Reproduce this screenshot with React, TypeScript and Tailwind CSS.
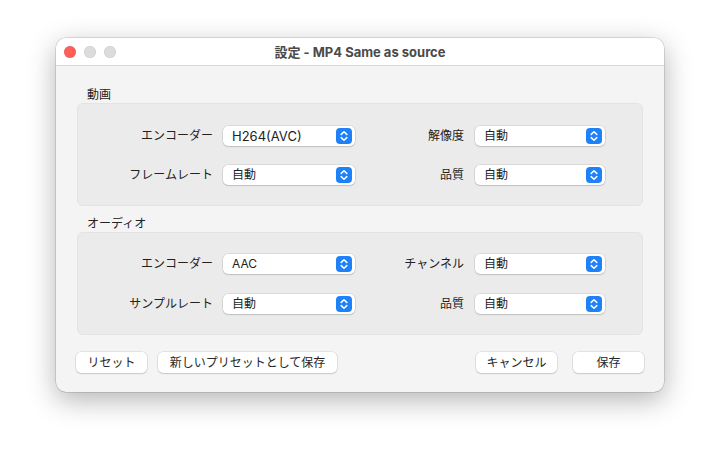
import React from "react";

const font = { fontFamily: 'Inter, "Noto Sans CJK JP", sans-serif' };

function Stepper() {
  return (
    <div className="w-[16px] h-[16px] rounded-[4px] bg-[#1f81f8] flex items-center justify-center">
      <svg width="16" height="16" viewBox="0 0 16 16" fill="none">
        <path d="M5.2 6.4 L8 3.8 L10.8 6.4" stroke="white" strokeWidth="1.5" strokeLinecap="round" strokeLinejoin="round" />
        <path d="M5.2 9.6 L8 12.2 L10.8 9.6" stroke="white" strokeWidth="1.5" strokeLinecap="round" strokeLinejoin="round" />
      </svg>
    </div>
  );
}

function Select({ value, w, latin }: { value: string; w: string; latin?: boolean }) {
  return (
    <div
      className={`${w} h-[20px] bg-white rounded-[5px] flex items-center justify-between pl-[9px] pr-[3px] shadow-[0_0_0_0.5px_rgba(0,0,0,0.14),0_1px_1.5px_rgba(0,0,0,0.12)]`}
    >
      <span className={`${latin ? "text-[13px]" : "text-[12px]"} leading-[16px] text-[#222222]`}>{value}</span>
      <Stepper />
    </div>
  );
}

function Row({ l1, v1, l2, v2, latin }: { l1: string; v1: string; l2: string; v2: string; latin?: boolean }) {
  return (
    <div className="flex items-center h-[20px]">
      <div className="w-[135px] text-right text-[12px] leading-[16px] text-[#222222]">{l1}</div>
      <div className="ml-[10px]">
        <Select value={v1} w="w-[132px]" latin={latin} />
      </div>
      <div className="w-[109px] text-right text-[12px] leading-[16px] text-[#222222]">{l2}</div>
      <div className="ml-[11px]">
        <Select value={v2} w="w-[130px]" />
      </div>
    </div>
  );
}

function Button({ children, w }: { children: React.ReactNode; w: string }) {
  return (
    <div
      className={`${w} h-[21px] bg-white rounded-[5px] flex items-center justify-center text-[12px] leading-[16px] text-[#262626] shadow-[0_0_0_0.5px_rgba(0,0,0,0.14),0_1px_1.5px_rgba(0,0,0,0.12)]`}
    >
      {children}
    </div>
  );
}

export default function App() {
  return (
    <div className="w-[720px] h-[466px] bg-white pl-[56px] pt-[38px]" style={font}>
      <div className="w-[608px] h-[354px] rounded-[10px] overflow-hidden bg-[#f4f4f4] shadow-[0_0_0_0.5px_rgba(0,0,0,0.22),0_8px_28px_rgba(0,0,0,0.3)] flex flex-col">
        <div className="h-[28px] bg-white border-b border-[#d8d8d8] grid grid-cols-[1fr_auto_1fr] items-center">
          <div className="flex items-center gap-[8px] pl-[8px]">
            <div className="w-[12px] h-[12px] rounded-full bg-[#fe5f57] shadow-[inset_0_0_0_0.5px_rgba(0,0,0,0.12)]" />
            <div className="w-[12px] h-[12px] rounded-full bg-[#dcdcdc] shadow-[inset_0_0_0_0.5px_rgba(0,0,0,0.1)]" />
            <div className="w-[12px] h-[12px] rounded-full bg-[#dcdcdc] shadow-[inset_0_0_0_0.5px_rgba(0,0,0,0.1)]" />
          </div>
          <div className="text-[13px] font-bold leading-[16px] text-[#4a4a4a]">設定 - MP4 Same as source</div>
          <div />
        </div>
        <div className="px-[21px]">
          <div className="mt-[21px] pl-[10px] text-[12px] leading-[16px] text-[#222222]">動画</div>
          <div className="bg-[#ebebeb] border border-[#e3e3e3] rounded-[6px] pt-[22px] pb-[20px] flex flex-col gap-[19px]">
            <Row l1="エンコーダー" v1="H264(AVC)" l2="解像度" v2="自動" latin />
            <Row l1="フレームレート" v1="自動" l2="品質" v2="自動" />
          </div>
          <div className="mt-[10px] pl-[10px] text-[12px] leading-[16px] text-[#222222]">オーディオ</div>
          <div className="bg-[#ebebeb] border border-[#e3e3e3] rounded-[6px] pt-[21px] pb-[20px] flex flex-col gap-[20px]">
            <Row l1="エンコーダー" v1="AAC" l2="チャンネル" v2="自動" />
            <Row l1="サンプルレート" v1="自動" l2="品質" v2="自動" />
          </div>
        </div>
        <div className="mt-[17px] px-[20px] flex items-center">
          <Button w="w-[71px]">リセット</Button>
          <div className="ml-[11px]">
            <Button w="w-[179px]">新しいプリセットとして保存</Button>
          </div>
          <div className="flex-1" />
          <Button w="w-[81px]">キャンセル</Button>
          <div className="ml-[16px]">
            <Button w="w-[71px]">保存</Button>
          </div>
        </div>
      </div>
    </div>
  );
}
